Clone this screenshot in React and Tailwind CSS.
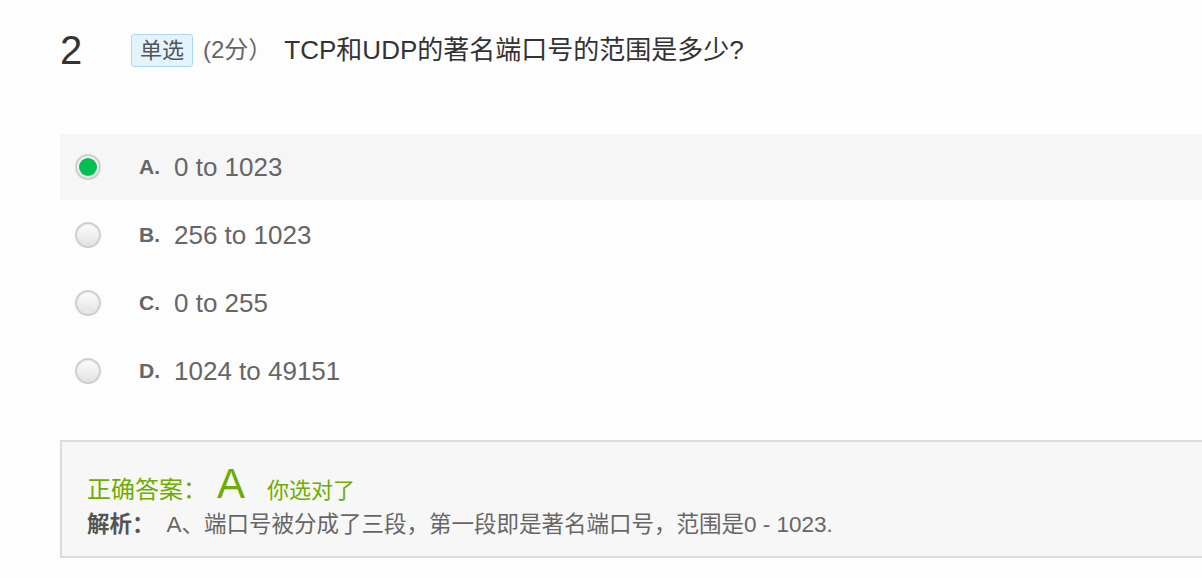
export default function App() {
  const opts = [
    { k: "A", t: "0 to 1023", sel: true },
    { k: "B", t: "256 to 1023" },
    { k: "C", t: "0 to 255" },
    { k: "D", t: "1024 to 49151" },
  ];
  return (
    <div
      className="w-[1202px] h-[578px] overflow-hidden bg-[#fdfdfd] pl-[60px] pt-[27px]"
      style={{ fontFamily: '"Liberation Sans", "Noto Sans CJK SC", sans-serif' }}
    >
      <div className="flex items-center h-[46px]">
        <div className="w-[71px] text-[40px] leading-none text-[#333]">2</div>
        <span className="inline-flex items-center h-[33px] px-[8px] bg-[#e3f4fd] border border-[#a8d8f6] rounded-[3px] text-[22px] text-[#555]">
          单选
        </span>
        <span className="ml-[10px] text-[24px] text-[#666]">(2分）</span>
        <span className="ml-[12px] text-[26px] text-[#333]">TCP和UDP的著名端口号的范围是多少?</span>
      </div>

      <div className="mt-[61px] flex flex-col">
        {opts.map((o) => (
          <div
            key={o.k}
            className={
              "flex items-center h-[66px] mb-[2px] -mr-[20px] pl-[15px] " +
              (o.sel ? "bg-[#f6f6f6]" : "")
            }
          >
            <div className="w-[26px] h-[26px] rounded-full border-2 border-[#cfcfcf] bg-gradient-to-b from-[#fcfcfc] to-[#e3e3e3] flex items-center justify-center shadow-[inset_0_1px_1px_rgba(0,0,0,0.08)]">
              {o.sel && <div className="w-[18px] h-[18px] rounded-full bg-[#00c150]" />}
            </div>
            <span className="ml-[38px] text-[21px] font-bold text-[#666]">{o.k}.</span>
            <span className="ml-[14px] text-[26px] text-[#666]">{o.t}</span>
          </div>
        ))}
      </div>

      <div className="mt-[34px] -mr-[20px] h-[118px] border-2 border-[#dcdcdc] bg-[#f7f7f7] pl-[25px] pt-[20px]">
        <div className="flex items-baseline text-[#6fac00] h-[44px]">
          <span className="text-[24px]">正确答案：</span>
          <span className="text-[42px] leading-[44px] ml-[10px]">A</span>
          <span className="text-[22px] ml-[22px]">你选对了</span>
        </div>
        <div className="flex items-center mt-[2px] text-[22.5px]">
          <span className="font-bold text-[#555]">解析：</span>
          <span className="ml-[12px] text-[#666]">A、端口号被分成了三段，第一段即是著名端口号，范围是0 - 1023.</span>
        </div>
      </div>
    </div>
  );
}
